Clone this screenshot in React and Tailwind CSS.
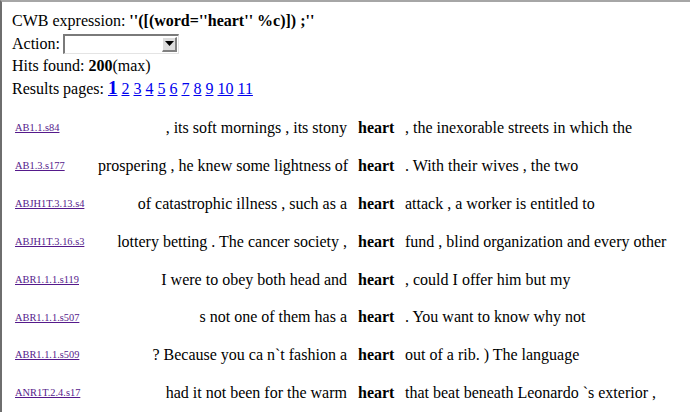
const ROWS = [
  { ref: 'AB1.1.s84', left: ', its soft mornings , its stony', right: ', the inexorable streets in which the' },
  { ref: 'AB1.3.s177', left: 'prospering , he knew some lightness of', right: '. With their wives , the two' },
  { ref: 'ABJH1T.3.13.s4', left: 'of catastrophic illness , such as a', right: 'attack , a worker is entitled to' },
  { ref: 'ABJH1T.3.16.s3', left: 'lottery betting . The cancer society ,', right: 'fund , blind organization and every other' },
  { ref: 'ABR1.1.1.s119', left: 'I were to obey both head and', right: ', could I offer him but my' },
  { ref: 'ABR1.1.1.s507', left: 's not one of them has a', right: '. You want to know why not' },
  { ref: 'ABR1.1.1.s509', left: '? Because you ca n`t fashion a', right: 'out of a rib. ) The language' },
  { ref: 'ANR1T.2.4.s17', left: 'had it not been for the warm', right: 'that beat beneath Leonardo `s exterior ,' },
];

const PAGES = ['2', '3', '4', '5', '6', '7', '8', '9', '10', '11'];

const Select = () => (
  <div className="ml-[3px] flex h-[20px] w-[116px] border-t-2 border-l-2 border-b border-r border-t-[#7a7a7a] border-l-[#7a7a7a] border-b-[#e4e4e4] border-r-[#e4e4e4] bg-white">
    <div className="flex-1" />
    <div className="my-[1px] mr-[1px] flex w-[15px] items-center justify-center border-t border-l border-b-2 border-r-2 border-t-white border-l-white border-b-[#808080] border-r-[#808080] bg-[#dcdcdc]">
      <svg width="9" height="6" viewBox="0 0 9 6">
        <path d="M0 0h9L4.5 5z" fill="#000" />
      </svg>
    </div>
  </div>
);

export default function App() {
  return (
    <div className="min-h-[412px] w-[690px] overflow-hidden border-t-2 border-l-2 border-t-[#a6a6a6] border-l-[#6e6e6e] bg-white pl-[10px] pt-[8px] font-['Liberation_Serif',serif] text-[16px] text-black">
      <div className="h-[22px] leading-[22px]">
        CWB expression: <b>''([(word=''heart'' %c)]) ;''</b>
      </div>
      <div className="flex h-[23px] items-center leading-[23px]">
        <span>Action:</span>
        <Select />
      </div>
      <div className="h-[22px] leading-[22px]">
        Hits found: <b>200</b>(max)
      </div>
      <div className="h-[22px] leading-[22px]">
        Results pages:{' '}
        <a href="#" className="text-[19px] font-bold text-[#0000ee] underline">1</a>
        {PAGES.map((p) => (
          <span key={p}>
            {' '}
            <a href="#" className="text-[#0000ee] underline">{p}</a>
          </span>
        ))}
      </div>

      <div className="mt-[10px]">
        {ROWS.map((r) => (
          <div key={r.ref} className="flex h-[37.9px] items-center">
            <div className="w-[86px] shrink-0 pl-[3px] text-[10.4px]">
              <a href="#" className="text-[#551a8b] underline">{r.ref}</a>
            </div>
            <div className="w-[252px] shrink-0 whitespace-nowrap pr-[3px] text-right">{r.left}</div>
            <div className="w-[47px] shrink-0 pl-[8px] font-bold">heart</div>
            <div className="whitespace-nowrap pl-[8px]">{r.right}</div>
          </div>
        ))}
      </div>
    </div>
  );
}
